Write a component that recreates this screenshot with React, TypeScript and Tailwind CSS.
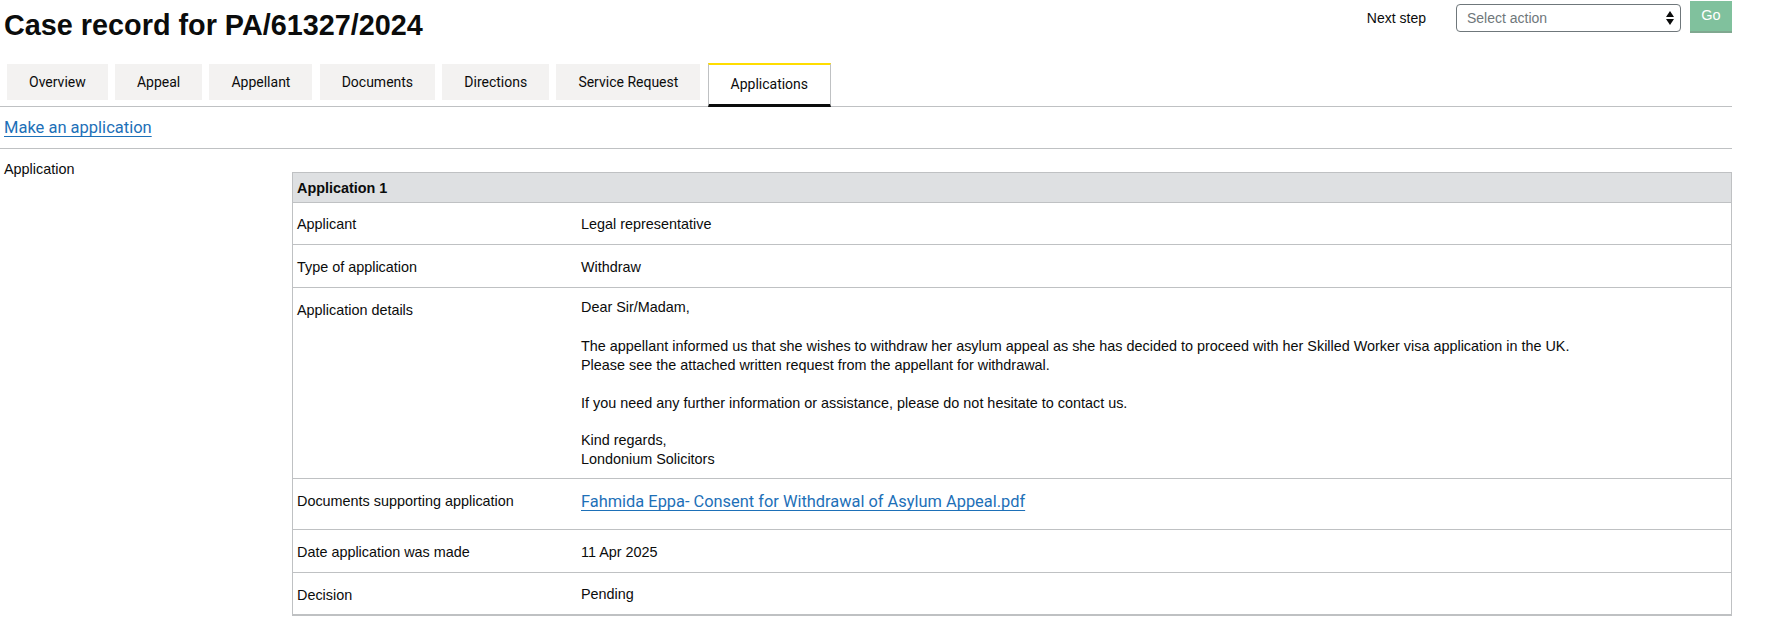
import React from 'react';

const tabs = ['Overview', 'Appeal', 'Appellant', 'Documents', 'Directions', 'Service Request', 'Applications'];
const activeTab = 'Applications';

const arial = "font-['Liberation_Sans',Arial,sans-serif]";
const transport = "font-['Roboto','Noto_Sans',sans-serif]";

function SelectArrows() {
    return (
        <svg width="8" height="14" viewBox="0 0 8 14" className="shrink-0">
            <path d="M4 0 L8 6 L0 6 Z" fill="#0b0c0c" />
            <path d="M0 8 L8 8 L4 14 Z" fill="#0b0c0c" />
        </svg>
    );
}

export default function App() {
    return (
        <div className={`w-[1732px] bg-white text-[#0b0c0c] ${arial}`}>
            {/* page header */}
            <div className="flex items-start justify-between">
                <h1 className="ml-1 pt-[9px] text-[28.8px] leading-[33px] font-bold">Case record for PA/61327/2024</h1>
                <div className="flex items-start">
                    <span className="mt-[9px] text-[14px] leading-[18px]">Next step</span>
                    <div className="ml-[30px] mt-[4px] flex h-[28px] w-[225px] items-center justify-between rounded-[4px] border border-[#6f777b] pl-[10px] pr-[6px]">
                        <span className="text-[14px] text-[#6f777b]">Select action</span>
                        <SelectArrows />
                    </div>
                    <button className="ml-[9px] mt-[1px] h-[30px] w-[42px] bg-[#80c19d] text-[14.5px] text-white shadow-[0_2px_0_#80a890]">
                        Go
                    </button>
                </div>
            </div>

            {/* tabs */}
            <ul className={`mt-[21px] flex items-start gap-[7.2px] border-b border-[#bfc1c3] pl-[7px] text-[14px] ${transport}`}>
                {tabs.map((tab) =>
                    tab === activeTab ? (
                        <li
                            key={tab}
                            className="-mb-px flex h-[44px] items-center border-x border-t-2 border-b-[3px] border-x-[#bfc1c3] border-t-[#ffdd00] border-b-[#0b0c0c] bg-white px-[22px]"
                        >
                            {tab}
                        </li>
                    ) : (
                        <li key={tab} className="mt-px flex h-[36px] items-center bg-[#f3f2f1] px-[22px]">
                            {tab}
                        </li>
                    )
                )}
            </ul>

            <div className={`flex h-[42px] items-center border-b border-[#bfc1c3] pl-1 ${transport}`}>
                <a href="#" className="text-[16.5px] leading-[19px] text-[#1d70b8] underline underline-offset-[3px]">
                    Make an application
                </a>
            </div>

            {/* applications */}
            <div className="flex items-start text-[14.4px] leading-[19px]">
                <div className="w-[292px] shrink-0 pl-1 pt-[11px]">Application</div>
                <div className="mt-[23px] flex-1 border-x border-t border-b-2 border-[#bfc1c3]">
                    <div className="flex h-[29px] items-center bg-[#dee0e2] pl-[4px] pt-px font-bold">Application 1</div>

                    <div className="grid h-[42px] grid-cols-[288px_1fr] border-t border-[#bfc1c3]">
                        <div className="pl-[4px] pt-[12px]">Applicant</div>
                        <div className="pt-[12px]">Legal representative</div>
                    </div>

                    <div className="grid h-[43px] grid-cols-[288px_1fr] border-t border-[#bfc1c3]">
                        <div className="pl-[4px] pt-[13px]">Type of application</div>
                        <div className="pt-[13px]">Withdraw</div>
                    </div>

                    <div className="grid h-[191px] grid-cols-[288px_1fr] border-t border-[#bfc1c3]">
                        <div className="pl-[4px] pt-[13px]">Application details</div>
                        <div className="pt-[10px] leading-[19.2px]">
                            <p>Dear Sir/Madam,</p>
                            <p className="mt-[20px]">
                                The appellant informed us that she wishes to withdraw her asylum appeal as she has decided to proceed with her Skilled Worker visa application in the UK.
                                <br />
                                Please see the attached written request from the appellant for withdrawal.
                            </p>
                            <p className="mt-[18px]">If you need any further information or assistance, please do not hesitate to contact us.</p>
                            <p className="mt-[18px]">
                                Kind regards,
                                <br />
                                Londonium Solicitors
                            </p>
                        </div>
                    </div>

                    <div className="grid h-[51px] grid-cols-[288px_1fr] border-t border-[#bfc1c3]">
                        <div className="pl-[4px] pt-[13px]">Documents supporting application</div>
                        <div className="pt-[10px]">
                            <a href="#" className={`text-[16.4px] leading-[25px] text-[#1d70b8] underline underline-offset-[3px] ${transport}`}>
                                Fahmida Eppa- Consent for Withdrawal of Asylum Appeal.pdf
                            </a>
                        </div>
                    </div>

                    <div className="grid h-[43px] grid-cols-[288px_1fr] border-t border-[#bfc1c3]">
                        <div className="pl-[4px] pt-[13px]">Date application was made</div>
                        <div className="pt-[13px]">11 Apr 2025</div>
                    </div>

                    <div className="grid h-[42px] grid-cols-[288px_1fr] border-t border-[#bfc1c3]">
                        <div className="pl-[4px] pt-[13px]">Decision</div>
                        <div className="pt-[12px]">Pending</div>
                    </div>
                </div>
            </div>
        </div>
    );
}
